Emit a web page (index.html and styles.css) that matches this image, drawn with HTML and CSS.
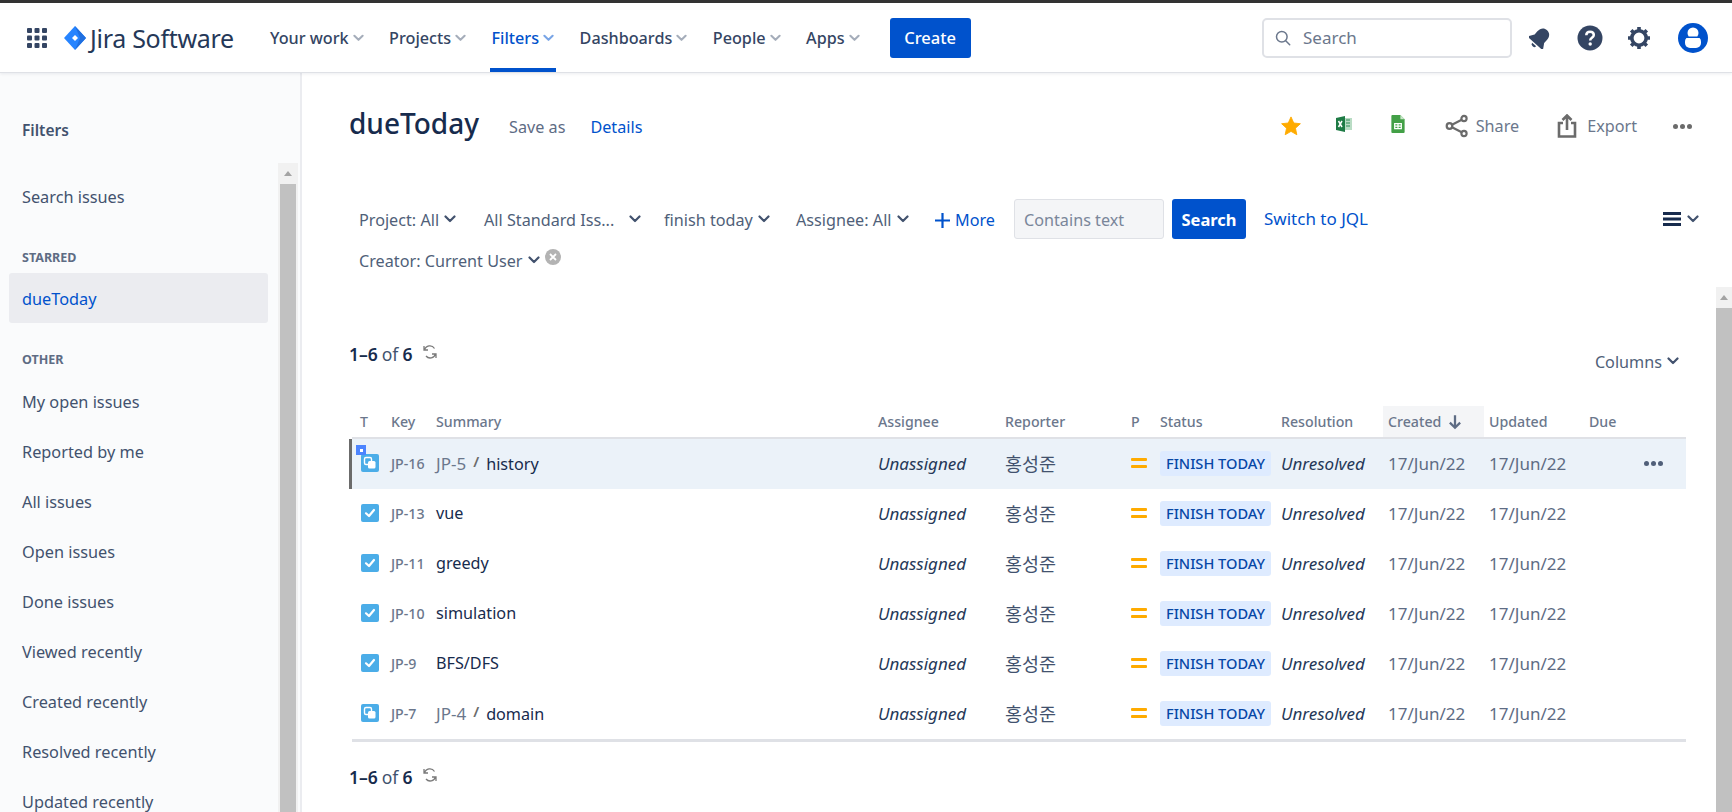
FILE: index.html
```html
<!DOCTYPE html>
<html lang="en">

<head>
  <meta charset="UTF-8">
  <title>dueToday - Jira</title>
  <link rel="stylesheet" href="styles.css">
</head>

<body>
  <svg class="defs" width="0" height="0">
    <symbol id="chev" viewBox="0 0 12 8"><path d="M1.500 1.500 6 6l4.500-4.500" fill="none" stroke="currentColor" stroke-width="2.200" stroke-linecap="round" stroke-linejoin="round"/></symbol>
    <symbol id="refresh" viewBox="0 0 16 16"><path d="M2 2v4h4M2.500 6A5.500 5.500 0 0 1 12.500 4.500M14 14v-4h-4M13.500 10A5.500 5.500 0 0 1 4 12" fill="none" stroke="#7a7a7a" stroke-width="1.300"/></symbol>
    <symbol id="subtask" viewBox="0 0 18 18"><rect width="18" height="18" rx="2" fill="#4bade8"/><rect x="3.500" y="3.500" width="7" height="7" rx="1.500" fill="none" stroke="#fff" stroke-width="1.400"/><rect x="7" y="7" width="7.500" height="7.500" rx="1.500" fill="#fff"/></symbol>
    <symbol id="task" viewBox="0 0 18 18"><rect width="18" height="18" rx="2" fill="#4bade8"/><path d="M5 9.300 8 12l5-6" fill="none" stroke="#fff" stroke-width="2.200" stroke-linecap="round" stroke-linejoin="round"/></symbol>
    <symbol id="prio" viewBox="0 0 16 12"><rect y="1" width="16" height="3" rx="1" fill="#ffab00"/><rect y="8" width="16" height="3" rx="1" fill="#ffab00"/></symbol>
  </svg>

  <header class="topbar">
    <svg class="apps" width="20" height="20" viewBox="0 0 20 20" fill="#344563">
      <rect x="0" y="0" width="5" height="5" rx="1"/><rect x="7.500" y="0" width="5" height="5" rx="1"/><rect x="15" y="0" width="5" height="5" rx="1"/>
      <rect x="0" y="7.500" width="5" height="5" rx="1"/><rect x="7.500" y="7.500" width="5" height="5" rx="1"/><rect x="15" y="7.500" width="5" height="5" rx="1"/>
      <rect x="0" y="15" width="5" height="5" rx="1"/><rect x="7.500" y="15" width="5" height="5" rx="1"/><rect x="15" y="15" width="5" height="5" rx="1"/>
    </svg>
    <svg class="logo" width="22" height="24" viewBox="0 0 22 24">
      <path d="M11 0 22 12 11 24 0 12Z" fill="#2684ff"/>
      <path d="M11 0 22 12 11 24 16 12Z" fill="#1f6fe0"/>
      <path d="M11 9 14 12 11 15 8 12Z" fill="#fff"/>
    </svg>
    <span class="brand">Jira Software</span>
    <nav class="nav">
      <a class="nav-item">Your work<svg class="nav-chev"><use href="#chev"/></svg></a>
      <a class="nav-item">Projects<svg class="nav-chev"><use href="#chev"/></svg></a>
      <a class="nav-item active">Filters<svg class="nav-chev"><use href="#chev"/></svg></a>
      <a class="nav-item">Dashboards<svg class="nav-chev"><use href="#chev"/></svg></a>
      <a class="nav-item">People<svg class="nav-chev"><use href="#chev"/></svg></a>
      <a class="nav-item">Apps<svg class="nav-chev"><use href="#chev"/></svg></a>
    </nav>
    <button class="create">Create</button>
    <div class="global-search">
      <svg width="16" height="16" viewBox="0 0 16 16"><circle cx="6.800" cy="6.800" r="5.300" fill="none" stroke="#6b778c" stroke-width="1.500"/><path d="m10.700 10.700 4 4" stroke="#6b778c" stroke-width="1.500" stroke-linecap="round"/></svg>
      <span>Search</span>
    </div>
    <svg class="bell" width="22" height="22" viewBox="0 0 24 24" fill="#344563">
      <g transform="rotate(42 12 12)">
        <path d="M12 0.500C7.500 0.500 5 4 5 8.500v4.500L1.500 18.500V20h21v-1.500L19 13V8.500C19 4 16.500 0.500 12 0.500z"/>
        <path d="M9 21.500a3 2.500 0 0 0 6 0z"/>
      </g>
    </svg>
    <svg class="help" width="26" height="26" viewBox="0 0 26 26">
      <circle cx="13" cy="13" r="12.500" fill="#344563"/>
      <path d="M9.300 10.200c0-2.200 1.700-3.500 3.800-3.500s3.700 1.300 3.700 3.300c0 2.800-3.600 2.800-3.600 5.400" fill="none" stroke="#fff" stroke-width="2.500"/>
      <circle cx="13.200" cy="19" r="1.700" fill="#fff"/>
    </svg>
    <svg class="gear" width="24" height="24" viewBox="0 0 24 24">
      <circle cx="12" cy="12" r="7.200" fill="none" stroke="#344563" stroke-width="3.600"/>
      <path d="M12 1v4M12 19v4M1 12h4M19 12h4M4.200 4.200 7 7M17 17l2.800 2.800M4.200 19.800 7 17M17 7l2.800-2.800" stroke="#344563" stroke-width="3.600"/>
    </svg>
    <svg class="avatar" width="30" height="30" viewBox="0 0 30 30">
      <circle cx="15" cy="15" r="15" fill="#0052cc"/>
      <circle cx="15" cy="10" r="5.500" fill="#fff"/>
      <rect x="7" y="13.500" width="16" height="11.500" rx="5" fill="#fff"/>
      <rect x="7" y="13.500" width="16" height="1.500" fill="#0052cc"/>
    </svg>
  </header>

  <div class="layout">
    <aside class="sidebar">
      <h2 class="side-title">Filters</h2>
      <div class="side-body">
        <ul class="side-list">
          <li class="side-item first">Search issues</li>
          <li class="side-head">STARRED</li>
          <li class="side-item selected">dueToday</li>
          <li class="side-head other">OTHER</li>
          <li class="side-item">My open issues</li>
          <li class="side-item">Reported by me</li>
          <li class="side-item">All issues</li>
          <li class="side-item">Open issues</li>
          <li class="side-item">Done issues</li>
          <li class="side-item">Viewed recently</li>
          <li class="side-item">Created recently</li>
          <li class="side-item">Resolved recently</li>
          <li class="side-item">Updated recently</li>
        </ul>
        <div class="scrollbar side-scroll"><div class="scroll-arrow"></div><div class="scroll-thumb"></div></div>
      </div>
    </aside>

    <main class="main">
      <div class="content">
        <div class="title-row">
          <h1 class="title">dueToday</h1>
          <a class="saveas">Save as</a>
          <a class="link details">Details</a>
          <div class="title-tools">
            <svg class="star" width="20" height="20" viewBox="0 0 22 21"><path d="M11 .5l3 6.700 7.300.8-5.400 4.900 1.500 7.200L11 16.400l-6.400 3.700 1.500-7.200L.7 8l7.300-.8z" fill="#ffab00" stroke="#ffab00" stroke-linejoin="round"/></svg>
            <svg class="xls" width="16" height="16" viewBox="0 0 16 16"><rect x="6" y="2" width="10" height="12" fill="#b9dcc4"/><path d="M10 4h4M10 7h4M10 10h4" stroke="#2e8b57"/><path d="M0 2 9 0v16L0 14z" fill="#1e7b45"/><path d="M2.500 5 6 11M6 5l-3.500 6" stroke="#fff" stroke-width="1.500"/></svg>
            <svg class="sheet" width="14" height="18" viewBox="0 0 14 19"><path d="M1 0h8.500L14 4.500V18a1 1 0 0 1-1 1H1a1 1 0 0 1-1-1V1a1 1 0 0 1 1-1z" fill="#43a047"/><path d="M9.500 0 14 4.500H9.500z" fill="#c8e6c9"/><path d="M3.500 9h7v5.500h-7zM3.500 11.700h7M7 9v5.500" fill="none" stroke="#fff" stroke-width="1.300"/></svg>
            <a class="tool share">
              <svg width="24" height="24" viewBox="0 0 24 24" fill="none" stroke="#6b6b6b" stroke-width="2.200"><circle cx="19" cy="4.500" r="2.600"/><circle cx="4.500" cy="12" r="2.800"/><circle cx="19" cy="19.500" r="2.600"/><path d="M7 10.700 16.700 5.800M7 13.300l9.700 4.900"/></svg>
              Share
            </a>
            <a class="tool export">
              <svg width="20" height="24" viewBox="0 0 20 24" fill="none" stroke="#6b6b6b" stroke-width="2.600"><path d="M6 9H2v13.500h16V9h-4"/><path d="M10 16V2M5.500 6 10 1.500 14.500 6"/></svg>
              Export
            </a>
            <span class="dots grey"><i></i><i></i><i></i></span>
          </div>
        </div>

        <div class="filters">
          <div class="filter-row">
            <a class="crit c1">Project: All<svg class="crit-chev"><use href="#chev"/></svg></a>
            <a class="crit c2">All Standard Iss...<svg class="crit-chev wide"><use href="#chev"/></svg></a>
            <a class="crit c3">finish today<svg class="crit-chev"><use href="#chev"/></svg></a>
            <a class="crit c4">Assignee: All<svg class="crit-chev"><use href="#chev"/></svg></a>
            <a class="more"><svg width="15" height="15" viewBox="0 0 15 15"><path d="M7.500 0v15M0 7.500h15" stroke="#0052cc" stroke-width="2.200"/></svg>More</a>
            <div class="contains">Contains text</div>
            <button class="search-btn">Search</button>
            <a class="link jql">Switch to JQL</a>
            <div class="layout-switch">
              <svg width="18" height="14" viewBox="0 0 18 14" fill="#172b4d"><rect width="18" height="3"/><rect y="5.500" width="18" height="3"/><rect y="11" width="18" height="3"/></svg>
              <svg class="switch-chev"><use href="#chev"/></svg>
            </div>
          </div>
          <div class="filter-row second">
            <a class="crit">Creator: Current User<svg class="crit-chev"><use href="#chev"/></svg></a>
            <svg class="clear" width="16" height="16" viewBox="0 0 16 16"><circle cx="8" cy="8" r="8" fill="#b3b3b3"/><path d="m5 5 6 6M11 5l-6 6" stroke="#fff" stroke-width="1.800"/></svg>
          </div>
        </div>

        <div class="count-row">
          <div class="count"><b>1–6</b> of <b>6</b><svg class="refresh"><use href="#refresh"/></svg></div>
          <a class="columns">Columns<svg class="crit-chev"><use href="#chev"/></svg></a>
        </div>

        <table class="issues">
          <colgroup>
            <col class="w-t"><col class="w-key"><col class="w-sum"><col class="w-asg"><col class="w-rep"><col class="w-p"><col class="w-st"><col class="w-res"><col class="w-cr"><col class="w-up"><col class="w-due">
          </colgroup>
          <thead>
            <tr>
              <th class="cell-t">T</th><th>Key</th><th>Summary</th><th>Assignee</th><th>Reporter</th><th>P</th><th>Status</th><th>Resolution</th>
              <th class="sorted">Created<svg class="arrow" width="14" height="16" viewBox="0 0 12 14"><path d="M6 1v11M1.500 7.500 6 12l4.500-4.500" fill="none" stroke="#5e6c84" stroke-width="2"/></svg></th>
              <th>Updated</th><th>Due</th>
            </tr>
          </thead>
          <tbody>
            <tr class="focused">
              <td class="cell-t"><span class="check-mark"><i></i></span><svg class="type"><use href="#subtask"/></svg></td>
              <td class="key">JP-16</td>
              <td class="sum"><span class="parent">JP-5</span><span class="slash">/</span>history</td>
              <td class="em">Unassigned</td><td class="rep">홍성준</td>
              <td><svg class="prio"><use href="#prio"/></svg></td>
              <td><span class="status">FINISH TODAY</span></td>
              <td class="em">Unresolved</td><td class="date">17/Jun/22</td><td class="date">17/Jun/22</td>
              <td><div class="row-more"><span class="dots"><i></i><i></i><i></i></span></div></td>
            </tr>
            <tr>
              <td class="cell-t"><svg class="type"><use href="#task"/></svg></td>
              <td class="key">JP-13</td><td class="sum">vue</td>
              <td class="em">Unassigned</td><td class="rep">홍성준</td>
              <td><svg class="prio"><use href="#prio"/></svg></td>
              <td><span class="status">FINISH TODAY</span></td>
              <td class="em">Unresolved</td><td class="date">17/Jun/22</td><td class="date">17/Jun/22</td><td></td>
            </tr>
            <tr>
              <td class="cell-t"><svg class="type"><use href="#task"/></svg></td>
              <td class="key">JP-11</td><td class="sum">greedy</td>
              <td class="em">Unassigned</td><td class="rep">홍성준</td>
              <td><svg class="prio"><use href="#prio"/></svg></td>
              <td><span class="status">FINISH TODAY</span></td>
              <td class="em">Unresolved</td><td class="date">17/Jun/22</td><td class="date">17/Jun/22</td><td></td>
            </tr>
            <tr>
              <td class="cell-t"><svg class="type"><use href="#task"/></svg></td>
              <td class="key">JP-10</td><td class="sum">simulation</td>
              <td class="em">Unassigned</td><td class="rep">홍성준</td>
              <td><svg class="prio"><use href="#prio"/></svg></td>
              <td><span class="status">FINISH TODAY</span></td>
              <td class="em">Unresolved</td><td class="date">17/Jun/22</td><td class="date">17/Jun/22</td><td></td>
            </tr>
            <tr>
              <td class="cell-t"><svg class="type"><use href="#task"/></svg></td>
              <td class="key">JP-9</td><td class="sum">BFS/DFS</td>
              <td class="em">Unassigned</td><td class="rep">홍성준</td>
              <td><svg class="prio"><use href="#prio"/></svg></td>
              <td><span class="status">FINISH TODAY</span></td>
              <td class="em">Unresolved</td><td class="date">17/Jun/22</td><td class="date">17/Jun/22</td><td></td>
            </tr>
            <tr>
              <td class="cell-t"><svg class="type"><use href="#subtask"/></svg></td>
              <td class="key">JP-7</td>
              <td class="sum"><span class="parent">JP-4</span><span class="slash">/</span>domain</td>
              <td class="em">Unassigned</td><td class="rep">홍성준</td>
              <td><svg class="prio"><use href="#prio"/></svg></td>
              <td><span class="status">FINISH TODAY</span></td>
              <td class="em">Unresolved</td><td class="date">17/Jun/22</td><td class="date">17/Jun/22</td><td></td>
            </tr>
          </tbody>
        </table>

        <div class="count foot"><b>1–6</b> of <b>6</b><svg class="refresh"><use href="#refresh"/></svg></div>
      </div>
      <div class="scrollbar main-scroll"><div class="scroll-arrow"></div><div class="scroll-thumb"></div></div>
    </main>
  </div>
</body>

</html>
```
FILE: styles.css
```css
* {
  box-sizing: border-box;
}
html, body {
  margin: 0;
  height: 812px;
  overflow: hidden;
}
body {
  border-top: 3px solid #333;
  font-family: "Noto Sans", "Noto Sans CJK KR", sans-serif;
  font-size: 16.200px;
  color: #172b4d;
  background: #fff;
}
ul {
  list-style: none;
  margin: 0;
  padding: 0;
}
.defs {
  display: block;
  height: 0;
}

/* top bar */
.topbar {
  display: flex;
  align-items: center;
  height: 70px;
  padding-left: 27px;
  border-bottom: 1px solid #dfe1e6;
  box-shadow: 0 1px 3px rgba(9, 30, 66, 0.08);
  position: relative;
}
.logo {
  margin-left: 17px;
}
.brand {
  margin-left: 4px;
  width: 178px;
  font-size: 25px;
  color: #253858;
  letter-spacing: -0.300px;
  white-space: nowrap;
}
.nav {
  display: flex;
  align-self: stretch;
  gap: 21.500px;
}
.nav-item {
  display: flex;
  align-items: center;
  padding: 0 2px;
  font-size: 16.200px;
  font-weight: 500;
  color: #344563;
  white-space: nowrap;
}
.nav-item.active {
  color: #0052cc;
  box-shadow: inset 0 -4px 0 #0052cc;
}
.nav-chev {
  width: 11px;
  height: 8px;
  margin-left: 4px;
  color: #a5adba;
}
.active .nav-chev {
  color: #79a5e6;
}
.create {
  width: 81px;
  height: 40px;
  margin-left: 28px;
  border: 0;
  border-radius: 3px;
  background: #0052cc;
  color: #fff;
  font: 500 16.500px "Noto Sans", sans-serif;
}
.global-search {
  display: flex;
  align-items: center;
  gap: 12px;
  width: 250px;
  height: 40px;
  margin-left: auto;
  padding-left: 11px;
  border: 2px solid #dfe1e6;
  border-radius: 5px;
  color: #6b778c;
  font-size: 17px;
}
.bell {
  margin-left: 17px;
}
.help {
  margin-left: 26px;
}
.gear {
  margin-left: 24px;
}
.avatar {
  margin-left: 27px;
  margin-right: 24px;
}

/* sidebar */
.layout {
  display: flex;
  height: 739px;
  overflow: hidden;
}
.sidebar {
  width: 302px;
  flex: none;
  background: #fafbfc;
  border-right: 2px solid #ebecf0;
}
.side-title {
  margin: 0;
  padding: 46px 0 0 22px;
  height: 90px;
  font-size: 15.500px;
  font-weight: 600;
  color: #42526e;
}
.side-body {
  display: flex;
  justify-content: space-between;
  height: 649px;
  overflow: hidden;
}
.side-list {
  width: 259px;
  margin-left: 9px;
  padding-top: 9px;
  flex: none;
}
.side-item {
  display: flex;
  align-items: center;
  height: 50px;
  padding-left: 13px;
  color: #42526e;
  font-size: 16.300px;
}
.side-item.selected {
  height: 50px;
  padding-top: 2px;
  border-radius: 3px;
  background: #ebecf0;
  color: #0052cc;
}
.side-head {
  display: flex;
  align-items: center;
  height: 27px;
  margin-top: 22px;
  padding-left: 13px;
  font-size: 12.500px;
  font-weight: 700;
  color: #5e6c84;
}
.side-head.other {
  margin-top: 23px;
  margin-bottom: 4px;
}
.side-head + .side-item.selected {
  margin-top: 2px;
}

/* scrollbars */
.scrollbar {
  width: 20px;
  background: #f1f1f1;
}
.side-scroll {
  margin-right: 2px;
  height: 649px;
}
.scroll-arrow {
  height: 21px;
  display: flex;
  align-items: center;
  justify-content: center;
}
.scroll-arrow::before {
  content: "";
  border: 4.500px solid transparent;
  border-top: 0;
  border-bottom: 5px solid #a3a3a3;
}
.scroll-thumb {
  height: 628px;
  margin: 0 2px;
  background: #c1c1c1;
}

/* main */
.main {
  flex: 1;
  display: flex;
  min-width: 0;
}
.content {
  flex: 1;
  min-width: 0;
  padding-left: 47px;
}
.main-scroll {
  width: 16px;
  flex: none;
  margin-top: 214px;
}
.main-scroll .scroll-thumb {
  height: 504px;
  margin: 0;
}
.link {
  color: #0052cc;
}
.title-row {
  display: flex;
  align-items: center;
  height: 62px;
  margin-top: 22px;
  padding-right: 24px;
}
.title {
  align-self: flex-start;
  margin: 10px 0 0;
  font-size: 28px;
  font-weight: 500;
  line-height: 36px;
  color: #172b4d;
}
.saveas {
  margin-left: 30px;
  padding-top: 2px;
  color: #5e6c84;
}
.details {
  margin-left: 25px;
  padding-top: 2px;
}
.title-tools {
  display: flex;
  align-items: center;
  margin-left: auto;
}
.xls {
  margin-left: 35px;
  margin-bottom: 4px;
}
.sheet {
  margin-left: 39px;
  margin-bottom: 4px;
}
.tool {
  display: flex;
  align-items: center;
  gap: 7px;
  color: #6b778c;
}
.share {
  margin-left: 40px;
}
.export {
  margin-left: 38px;
  gap: 10px;
}
.dots {
  display: inline-flex;
  gap: 2px;
}
.dots i {
  width: 5px;
  height: 5px;
  border-radius: 50%;
  background: #505f79;
}
.dots.grey {
  margin-left: 36px;
}
.dots.grey i {
  background: #6b6b6b;
}

/* filter bar */
.filters {
  margin-top: 42px;
  padding-left: 10px;
  height: 142px;
}
.filter-row {
  display: flex;
  align-items: center;
  height: 40px;
  padding-right: 17px;
}
.filter-row.second {
  height: 30px;
  margin-top: 6px;
}
.crit {
  display: flex;
  align-items: center;
  padding-top: 2px;
  color: #505f79;
  white-space: nowrap;
}
.crit-chev {
  width: 12px;
  height: 8px;
  margin-left: 5px;
  margin-bottom: 3px;
  color: #42526e;
}
.crit-chev.wide {
  margin-left: 15px;
}
.c1 {
  width: 125px;
}
.c2 {
  width: 180px;
}
.c3 {
  width: 132px;
}
.c4 {
  width: 139px;
}
.more {
  display: flex;
  align-items: center;
  gap: 5px;
  width: 79px;
  padding-top: 2px;
  color: #0052cc;
}
.contains {
  display: flex;
  align-items: center;
  width: 150px;
  height: 40px;
  padding: 2px 0 0 9px;
  border: 1px solid #dfe1e6;
  border-radius: 3px;
  background: #f4f5f7;
  color: #7a869a;
}
.search-btn {
  width: 74px;
  height: 40px;
  margin-left: 8px;
  border: 0;
  border-radius: 3px;
  background: #0052cc;
  color: #fff;
  font: 700 16.500px "Noto Sans", sans-serif;
}
.jql {
  margin-left: 18px;
  margin-bottom: 2px;
  font-size: 17px;
}
.layout-switch {
  display: flex;
  align-items: center;
  margin-left: auto;
  gap: 6px;
}
.switch-chev {
  width: 12px;
  height: 8px;
  color: #42526e;
}
.clear {
  margin-left: 5px;
  margin-bottom: 6px;
}

/* results */
.count-row {
  display: flex;
  justify-content: space-between;
  align-items: flex-start;
  height: 65px;
  padding-top: 1px;
  padding-right: 37px;
}
.count {
  display: flex;
  align-items: center;
  gap: 4px;
  height: 24px;
  font-size: 17.500px;
  color: #42526e;
}
.count b {
  color: #172b4d;
  font-weight: 600;
}
.refresh {
  width: 16px;
  height: 16px;
  margin: 0 0 5px 6px;
}
.columns {
  display: flex;
  align-items: center;
  margin-top: 9px;
  color: #505f79;
}
.columns .crit-chev {
  margin-bottom: 2px;
}
.issues {
  width: 1334px;
  margin-left: 3px;
  table-layout: fixed;
  border-collapse: separate;
  border-spacing: 0;
}
.w-t { width: 34px; }
.w-key { width: 45px; }
.w-sum { width: 442px; }
.w-asg { width: 127px; }
.w-rep { width: 126px; }
.w-p { width: 29px; }
.w-st { width: 121px; }
.w-res { width: 107px; }
.w-cr { width: 101px; }
.w-up { width: 100px; }
.w-due { width: 102px; }
.issues th {
  height: 33px;
  padding: 0 0 0 5px;
  border-bottom: 2px solid #dfe1e6;
  text-align: left;
  font-size: 14.200px;
  font-weight: 500;
  color: #6b778c;
  white-space: nowrap;
}
.issues th.sorted {
  background: #f4f5f7;
}
.arrow {
  margin: -4px 0 -4px 7px;
  vertical-align: 1px;
}
.issues td {
  height: 50px;
  padding: 0 0 2px 5px;
  white-space: nowrap;
}
.issues tbody tr:last-child td {
  height: 53px;
  border-bottom: 3px solid #dfe1e6;
}
.issues .cell-t {
  padding-left: 8px;
  position: relative;
}
.focused {
  background: #ebf2f9;
  box-shadow: -3px 0 0 #6b6b6b;
}
.type {
  display: block;
  width: 18px;
  height: 18px;
  margin-left: 1px;
}
.check-mark {
  position: absolute;
  left: 4px;
  top: 6px;
  width: 10px;
  height: 10px;
  background: #4c84ff;
  display: flex;
  align-items: center;
  justify-content: center;
}
.check-mark i {
  width: 3px;
  height: 3px;
  background: #fff;
}
.key {
  font-size: 14.200px;
  font-weight: 500;
  color: #6b778c;
}
.sum {
  font-size: 16.200px;
  color: #172b4d;
}
.parent {
  font-size: 17px;
  color: #6b778c;
}
.slash {
  margin: 0 7px;
  color: #6b6b6b;
  font-size: 15px;
  font-weight: 600;
  vertical-align: 3px;
}
.em {
  font-style: italic;
  font-size: 17px;
  color: #253858;
}
.rep {
  font-size: 18.500px;
  color: #42526e;
}
.date {
  font-size: 17px;
  color: #5e6c84;
}
.prio {
  display: block;
  width: 16px;
  height: 12px;
}
.status {
  display: inline-block;
  padding: 0 6px;
  height: 25px;
  line-height: 25px;
  border-radius: 3px;
  background: #deebff;
  color: #0747a6;
  font-size: 14.600px;
  font-weight: 500;
}
.row-more {
  display: flex;
  justify-content: flex-end;
  padding-right: 23px;
}
.foot {
  margin-top: 23px;
}
```
